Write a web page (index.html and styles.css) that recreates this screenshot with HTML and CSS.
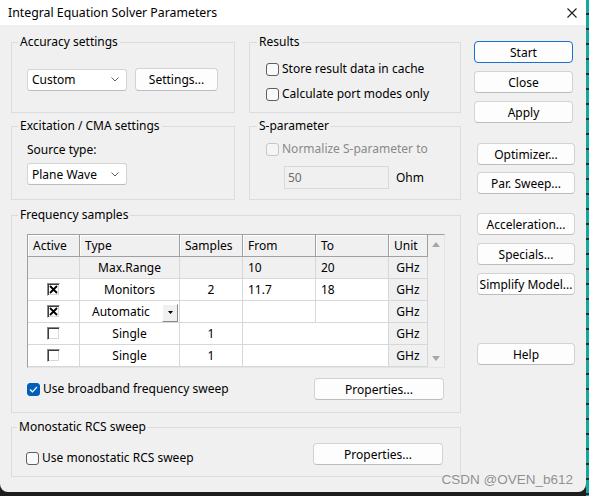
FILE: index.html
```html
<!DOCTYPE html>
<html>
<head>
  <title>Integral Equation Solver Parameters</title>
  <link rel="stylesheet" href="styles.css">
</head>
<body>
  <div class="desktop">
    <div id="dialog">
      <div class="titlebar">
        <span class="title">Integral Equation Solver Parameters</span>
        <svg class="close-x" width="10" height="10" viewBox="0 0 10 10"><path d="M0.5 0.5L9.5 9.5M9.5 0.5L0.5 9.5" stroke="#1b1b1b" stroke-width="1.1" fill="none"/></svg>
      </div>

      <div class="content">
        <div class="main">
          <div class="row">
            <div class="group accuracy">
              <div class="group-title">Accuracy settings</div>
              <div class="line acc-line">
                <div class="combo"><span>Custom</span><svg width="8" height="5" viewBox="0 0 8 5"><path d="M0.5 0.5L4 4L7.5 0.5" stroke="#606060" fill="none"/></svg></div>
                <button class="btn settings-btn">Settings...</button>
              </div>
            </div>
            <div class="group results">
              <div class="group-title">Results</div>
              <label class="check first"><span class="box"></span>Store result data in cache</label>
              <label class="check second"><span class="box"></span>Calculate port modes only</label>
            </div>
          </div>

          <div class="row row-two">
            <div class="group excitation">
              <div class="group-title">Excitation / CMA settings</div>
              <div class="source-label">Source type:</div>
              <div class="combo source-combo"><span>Plane Wave</span><svg width="8" height="5" viewBox="0 0 8 5"><path d="M0.5 0.5L4 4L7.5 0.5" stroke="#606060" fill="none"/></svg></div>
            </div>
            <div class="group sparam">
              <div class="group-title">S-parameter</div>
              <label class="check disabled norm"><span class="box"></span>Normalize S-parameter to</label>
              <div class="ohm-row">
                <div class="field">50</div>
                <span>Ohm</span>
              </div>
            </div>
          </div>

          <div class="group freq">
            <div class="group-title">Frequency samples</div>
            <div class="grid">
              <div class="grid-body">
                <div class="grid-row head">
                  <div class="cell">Active</div>
                  <div class="cell">Type</div>
                  <div class="cell">Samples</div>
                  <div class="cell">From</div>
                  <div class="cell">To</div>
                  <div class="cell">Unit</div>
                </div>
                <div class="grid-row fixed">
                  <div class="cell"></div>
                  <div class="cell mid">Max.Range</div>
                  <div class="cell"></div>
                  <div class="cell">10</div>
                  <div class="cell">20</div>
                  <div class="cell mid unit">GHz</div>
                </div>
                <div class="grid-row">
                  <div class="cell act"><span class="xbox"><svg width="9" height="9" viewBox="0 0 9 9"><path d="M1 1L8 8M8 1L1 8" stroke="#000" stroke-width="1.8"/></svg></span></div>
                  <div class="cell mid">Monitors</div>
                  <div class="cell mid">2</div>
                  <div class="cell">11.7</div>
                  <div class="cell">18</div>
                  <div class="cell mid unit">GHz</div>
                </div>
                <div class="grid-row">
                  <div class="cell act"><span class="xbox"><svg width="9" height="9" viewBox="0 0 9 9"><path d="M1 1L8 8M8 1L1 8" stroke="#000" stroke-width="1.8"/></svg></span></div>
                  <div class="cell auto"><span>Automatic</span><span class="drop"><svg width="5" height="3" viewBox="0 0 5 3"><path d="M0 0H5L2.5 3Z" fill="#000"/></svg></span></div>
                  <div class="cell"></div>
                  <div class="cell"></div>
                  <div class="cell"></div>
                  <div class="cell mid unit">GHz</div>
                </div>
                <div class="grid-row">
                  <div class="cell act"><span class="xbox"></span></div>
                  <div class="cell mid">Single</div>
                  <div class="cell mid">1</div>
                  <div class="cell span2"></div>
                  <div class="cell mid unit">GHz</div>
                </div>
                <div class="grid-row">
                  <div class="cell act"><span class="xbox"></span></div>
                  <div class="cell mid">Single</div>
                  <div class="cell mid">1</div>
                  <div class="cell span2"></div>
                  <div class="cell mid unit">GHz</div>
                </div>
              </div>
              <div class="vscroll">
                <span class="arrow up"></span>
                <span class="arrow down"></span>
              </div>
            </div>
            <div class="sweep-row">
              <label class="check"><span class="box on"><svg width="9" height="7" viewBox="0 0 9 7"><path d="M1 3.5L3.4 5.8L8 1" stroke="#fff" stroke-width="1.2" fill="none"/></svg></span>Use broadband frequency sweep</label>
              <button class="btn props">Properties...</button>
            </div>
          </div>

          <div class="group rcs">
            <div class="group-title">Monostatic RCS sweep</div>
            <div class="sweep-row rcs-row">
              <label class="check"><span class="box"></span>Use monostatic RCS sweep</label>
              <button class="btn props">Properties...</button>
            </div>
          </div>
        </div>

        <div class="side">
          <button class="btn default">Start</button>
          <button class="btn gap8">Close</button>
          <button class="btn gap8">Apply</button>
          <button class="btn lower optimizer">Optimizer...</button>
          <button class="btn lower gap7">Par. Sweep...</button>
          <button class="btn lower accel">Acceleration...</button>
          <button class="btn lower gap8">Specials...</button>
          <button class="btn lower gap8">Simplify Model...</button>
          <button class="btn lower help">Help</button>
        </div>
      </div>

      <div class="watermark">CSDN @OVEN_b612</div>
    </div>
    <div class="edge"></div>
  </div>
</body>
</html>
```

FILE: styles.css
```css
/* dialog look, roughly Windows 11 */
* {
  box-sizing: border-box;
}
body {
  margin: 0;
  background: #1e1e1e;
  font-family: "Noto Sans", sans-serif;
  font-size: 12px;
  color: #000;
}
.desktop {
  display: flex;
  width: 589px;
  height: 496px;
}
#dialog {
  position: relative;
  width: 586px;
  height: 492px;
  background: #f0f0f0;
  border-radius: 0 0 8px 8px;
  overflow: hidden;
}
.edge {
  width: 3px;
  height: 496px;
  background: repeating-linear-gradient(to bottom, #13ab9e 0 13px, #2a2a2a 13px 15px);
}

.titlebar {
  height: 25px;
  background: #fff;
  display: flex;
  align-items: center;
  justify-content: space-between;
  padding: 0 9px 0 8px;
}
.title {
  font-size: 12.3px;
}

.content {
  display: flex;
  gap: 13px;
  padding: 17px 0 0 11px;
}
.main {
  width: 450px;
  display: flex;
  flex-direction: column;
}
.row {
  display: flex;
  gap: 14px;
}
.row-two {
  margin-top: 13px;
}

.group {
  border: 1px solid #dcdcdc;
  padding-left: 15px;
}
.group-title {
  width: max-content;
  margin: -9px 0 0 -9px;
  padding: 0 2px;
  line-height: 16px;
  background: #f0f0f0;
}
.accuracy {
  width: 224px;
  height: 71px;
}
.results {
  width: 212px;
  height: 71px;
  padding-left: 16px;
}
.excitation {
  width: 224px;
  height: 74px;
}
.sparam {
  width: 212px;
  height: 74px;
  padding-left: 16px;
}
.freq {
  height: 198px;
  margin-top: 15px;
}
.rcs {
  height: 50px;
  margin-top: 14px;
  padding-left: 14px;
}

/* controls */
.line {
  display: flex;
  align-items: center;
}
.acc-line {
  margin-top: 18px;
}
.combo {
  width: 100px;
  height: 22px;
  display: flex;
  align-items: center;
  justify-content: space-between;
  padding: 0 7px 0 4px;
  background: #fff;
  border: 1px solid #d4d4d4;
  border-bottom-color: #bcbcbc;
  border-radius: 3px;
}
.source-label {
  margin-top: 8px;
  line-height: 16px;
}
.source-combo {
  margin-top: 5px;
}

.btn {
  height: 22px;
  padding: 0;
  font-family: inherit;
  font-size: 12px;
  color: #000;
  background: #fdfdfd;
  border: 1px solid #d3d3d3;
  border-bottom-color: #bdbdbd;
  border-radius: 4px;
}
.settings-btn {
  width: 83px;
  height: 23px;
  margin-left: 8px;
}
.props {
  width: 130px;
}

.check {
  display: flex;
  align-items: center;
  gap: 3px;
  line-height: 16px;
}
.box {
  width: 13px;
  height: 13px;
  border: 1px solid #5f5f5f;
  border-radius: 3px;
  background: #f9f9f9;
  display: flex;
  align-items: center;
  justify-content: center;
}
.box.on {
  background: #005fb8;
  border-color: #005fb8;
}
.results .first {
  margin-top: 11px;
}
.results .second {
  margin-top: 9px;
}
.disabled {
  color: #8a8a8a;
}
.disabled .box {
  border-color: #c6c6c6;
  background: #f5f5f5;
}
.norm {
  margin-top: 7px;
}
.ohm-row {
  display: flex;
  align-items: center;
  gap: 7px;
  margin: 9px 0 0 18px;
}
.field {
  width: 105px;
  height: 23px;
  line-height: 21px;
  padding-left: 3px;
  color: #6d6d6d;
  background: #f0f0f0;
  border: 1px solid #d9d9d9;
}

/* frequency grid */
.grid {
  display: flex;
  width: 418px;
  margin-top: 11px;
  border: 1px solid;
  border-color: #a0a0a0 #e4e4e4 #e4e4e4 #a0a0a0;
  background: #fff;
}
.grid-row {
  display: grid;
  grid-template-columns: 52px 100px 63px 73px 73px 39px;
  height: 22px;
}
.cell {
  border-right: 1px solid #d7d7d7;
  border-bottom: 1px solid #d7d7d7;
  padding: 0 5px;
  line-height: 21px;
  white-space: nowrap;
  overflow: hidden;
}
.head .cell {
  background: #f0f0f0;
  border-right-color: #a0a0a0;
  border-bottom-color: #a0a0a0;
  box-shadow: inset 1px 1px #fff;
}
.fixed .cell,
.unit {
  background: #f0f0f0;
}
.mid {
  text-align: center;
}
.span2 {
  grid-column: span 2;
}
.act {
  display: flex;
  align-items: center;
  justify-content: center;
}
.xbox {
  width: 13px;
  height: 13px;
  display: flex;
  align-items: center;
  justify-content: center;
  background: #fff;
  border: 1px solid;
  border-color: #8a8a8a #fff #fff #8a8a8a;
  box-shadow: inset 1px 1px #3c3c3c, inset -1px -1px #d8d8d8;
}
.auto {
  display: flex;
  align-items: center;
  justify-content: space-between;
  padding: 0 1px 0 12px;
}
.drop {
  width: 16px;
  height: 18px;
  margin-top: 2px;
  display: flex;
  align-items: center;
  justify-content: center;
  background: #f0f0f0;
  border: 1px solid;
  border-color: #fff #8a8a8a #8a8a8a #fff;
}
.vscroll {
  width: 16px;
  background: #f0f0f0;
  display: flex;
  flex-direction: column;
  justify-content: space-between;
  align-items: center;
  padding: 7px 0 6px;
}
.arrow {
  width: 0;
  height: 0;
  border-left: 4px solid transparent;
  border-right: 4px solid transparent;
}
.arrow.up {
  border-bottom: 5px solid #a6a6a6;
}
.arrow.down {
  border-top: 5px solid #a6a6a6;
}

.sweep-row {
  display: flex;
  justify-content: space-between;
  align-items: center;
  width: 417px;
  margin-top: 10px;
}
.rcs-row {
  align-items: flex-start;
  margin-top: 8px;
}
.rcs-row .check {
  margin-top: 7px;
}

/* right column */
.side {
  display: flex;
  flex-direction: column;
  margin-top: -1px;
}
.side .btn {
  width: 99px;
}
.side .lower {
  width: 98px;
  margin-left: 3px;
}
.default {
  border: 1px solid #1a6fd0;
}
.gap8 {
  margin-top: 8px;
}
.gap7 {
  margin-top: 7px;
}
.optimizer {
  margin-top: 20px;
}
.accel {
  margin-top: 19px;
}
.help {
  margin-top: 48px;
}

.watermark {
  position: absolute;
  right: 13px;
  bottom: 5px;
  font-family: "Liberation Sans", sans-serif;
  font-size: 13.5px;
  color: #8e8e8e;
  text-shadow: 0 0 1px #fff;
}
```
